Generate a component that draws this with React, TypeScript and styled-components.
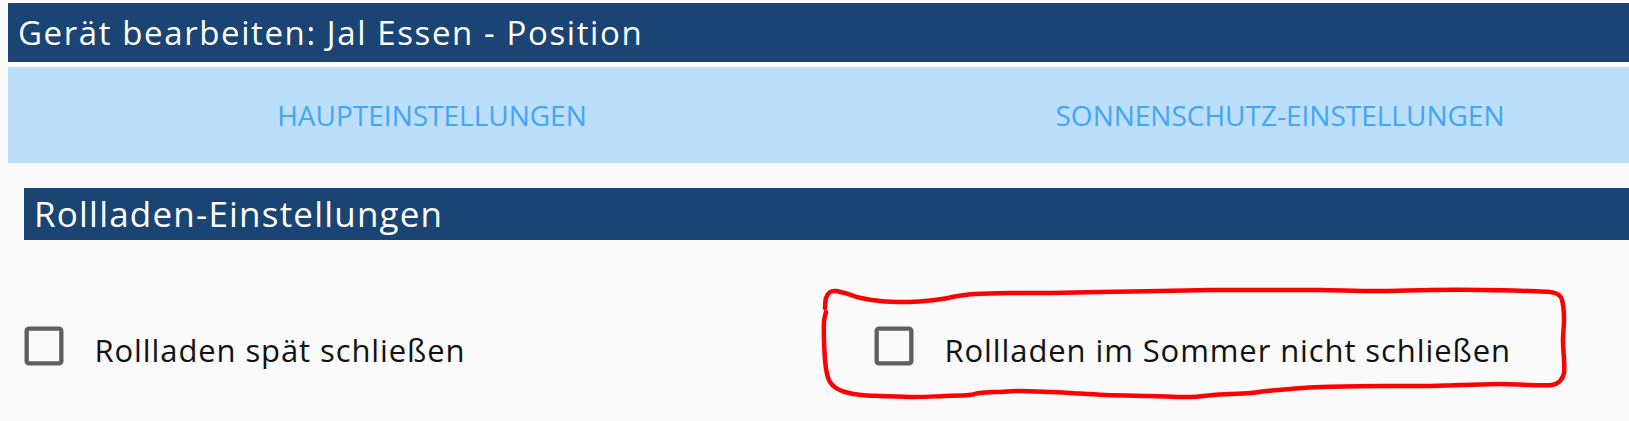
import React from 'react'
import styled, { createGlobalStyle } from 'styled-components'

const GlobalStyle = createGlobalStyle`
  html, body {
    margin: 0;
    padding: 0;
    background: #fafafa;
    overflow: hidden;
  }
  body {
    font-family: "Open Sans", "Noto Sans", sans-serif;
    font-stretch: 92%;
  }
`

// hand drawn red marker around the second option (page coordinates)
const markPoints: [number, number][] = [
  [825, 308], [826, 298], [830, 292], [836, 291], [848, 294], [861, 298], [880, 301],
  [905, 302], [925, 301], [942, 299], [958, 296], [975, 294], [1010, 293], [1051, 293],
  [1100, 292], [1159, 291], [1210, 290], [1267, 290], [1320, 290], [1376, 291],
  [1430, 290], [1484, 290], [1530, 291], [1550, 292], [1560, 296], [1563, 305],
  [1564, 320], [1563, 340], [1564, 360], [1564, 373], [1560, 381], [1552, 385],
  [1530, 385], [1500, 384], [1460, 385], [1430, 386], [1380, 386], [1321, 387],
  [1290, 389], [1267, 391], [1250, 393], [1213, 395], [1190, 397], [1150, 396],
  [1105, 395], [1070, 393], [1051, 392], [1020, 391], [997, 392], [980, 393],
  [969, 395], [945, 396], [915, 397], [880, 396], [861, 395], [845, 392], [836, 388],
  [830, 382], [827, 374], [825, 360], [824, 340], [824, 322], [826, 312],
]

// catmull-rom through the points, as cubic beziers
const smoothPath = (pts: [number, number][]) => {
  let d = `M${pts[0][0]} ${pts[0][1]}`
  for (let i = 0; i < pts.length - 1; i++) {
    const p0 = pts[i - 1] || pts[i]
    const p1 = pts[i]
    const p2 = pts[i + 1]
    const p3 = pts[i + 2] || p2
    const c1x = p1[0] + (p2[0] - p0[0]) / 6
    const c1y = p1[1] + (p2[1] - p0[1]) / 6
    const c2x = p2[0] - (p3[0] - p1[0]) / 6
    const c2y = p2[1] - (p3[1] - p1[1]) / 6
    d += ` C${c1x.toFixed(1)} ${c1y.toFixed(1)} ${c2x.toFixed(1)} ${c2y.toFixed(1)} ${p2[0]} ${p2[1]}`
  }
  return d
}

const Page = styled.div`
  padding: 3px 0 0 8px;
`

const Dialog = styled.div`
  width: 1696px;
  background: #ffffff;
`

const TitleBar = styled.div`
  height: 59px;
  background: #1a4474;
  color: #ffffff;
  font-size: 33px;
  letter-spacing: 1.6px;
  line-height: 59px;
  padding-left: 10px;
  white-space: nowrap;
`

const TabBar = styled.div`
  margin-top: 5px;
  height: 96px;
  display: flex;
  background: #bbdefb;
`

const Tab = styled.div`
  width: 848px;
  display: flex;
  align-items: center;
  justify-content: center;
  color: #42a5f5;
  font-size: 28px;
  text-transform: uppercase;
`

const Content = styled.div`
  background: #fafafa;
  padding: 25px 16px 40px;
`

const SectionHeader = styled.div`
  height: 52px;
  background: #1a4474;
  color: #ffffff;
  font-size: 35px;
  letter-spacing: 1.2px;
  line-height: 52px;
  padding-left: 10px;
`

const Options = styled.div`
  display: grid;
  grid-template-columns: 850px 1fr;
  margin-top: 80px;
`

const Option = styled.label`
  display: flex;
  align-items: center;
  gap: 25px;
  margin-left: -6.5px;
`

const Box = styled.svg`
  width: 52px;
  height: 52px;
  fill: #5f5f5f;
  flex: none;
`

const Label = styled.span`
  color: #111111;
  font-size: 31px;
  letter-spacing: 0.9px;
  white-space: nowrap;
  padding-top: 8px;
`

const Marker = styled.svg`
  position: absolute;
  left: 0;
  top: 0;
  pointer-events: none;
`

const CheckOption: React.FC<{ text: string }> = ({ text }) => (
  <Option>
    <Box viewBox="0 0 24 24">
      <path d="M19 5v14H5V5h14m0-2H5c-1.1 0-2 .9-2 2v14c0 1.1.9 2 2 2h14c1.1 0 2-.9 2-2V5c0-1.1-.9-2-2-2z" />
    </Box>
    <Label>{text}</Label>
  </Option>
)

export default function App() {
  return (
    <>
      <GlobalStyle />
      <Page>
        <Dialog>
          <TitleBar>Gerät bearbeiten: Jal Essen - Position</TitleBar>
          <TabBar>
            <Tab>Haupteinstellungen</Tab>
            <Tab>Sonnenschutz-Einstellungen</Tab>
          </TabBar>
          <Content>
            <SectionHeader>Rollladen-Einstellungen</SectionHeader>
            <Options>
              <CheckOption text="Rollladen spät schließen" />
              <CheckOption text="Rollladen im Sommer nicht schließen" />
            </Options>
          </Content>
        </Dialog>
      </Page>
      <Marker width="1629" height="421">
        <path d={smoothPath(markPoints)} fill="none" stroke="#ff0000" strokeWidth="4.5" strokeLinecap="round" strokeLinejoin="round" />
      </Marker>
    </>
  )
}
